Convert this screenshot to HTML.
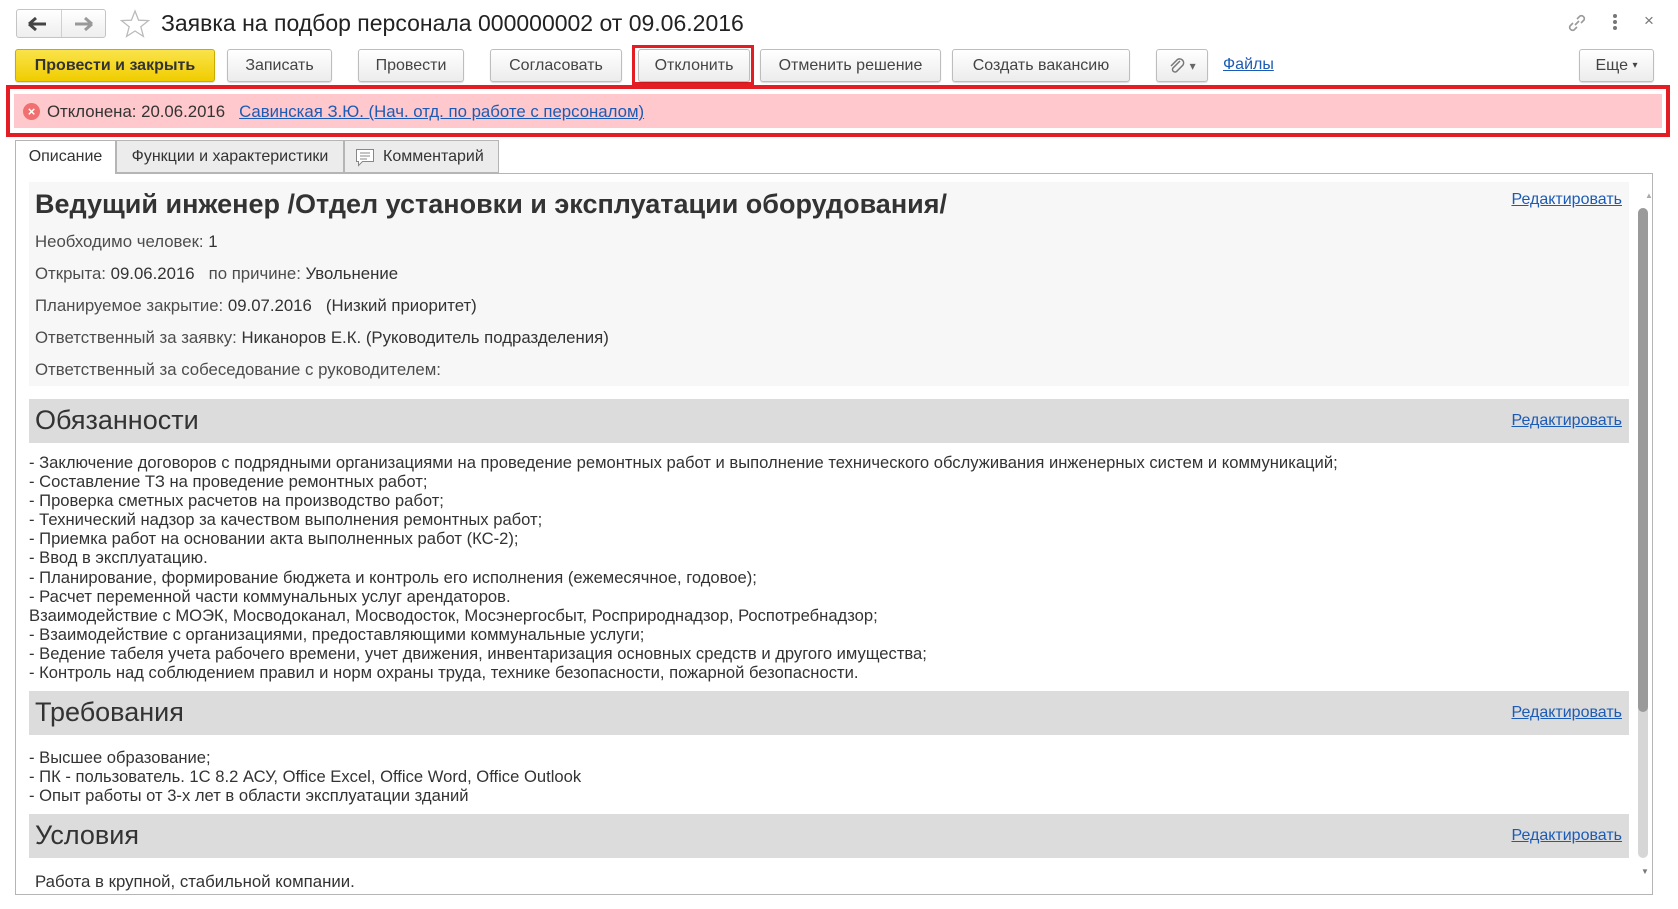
<!DOCTYPE html>
<html><head><meta charset="utf-8"><style>
*{box-sizing:border-box;margin:0;padding:0}
body{width:1678px;height:909px;background:#fff;font-family:"Liberation Sans",Arial,sans-serif;color:#333;position:relative;overflow:hidden}
.a{position:absolute}
.btn{position:absolute;top:49px;height:33px;border:1px solid #bdbdbd;border-radius:3px;background:linear-gradient(#fff,#ececec);box-shadow:0 1px 1px rgba(0,0,0,.15);font-size:16px;color:#444;display:flex;align-items:center;justify-content:center}
.row{position:absolute;left:35px;font-size:16.8px;color:#4d4d4d;line-height:20px}
.row b{font-weight:normal;color:#333}
.bar{position:absolute;left:29px;width:1600px;height:44px;background:#dcdcdc}
.bar span{position:absolute;left:6px;top:6px;font-size:27px;color:#333}
.ed{position:absolute;right:56px;font-size:16px;color:#1c5bb5;text-decoration:underline}
.lst{position:absolute;left:29px;font-size:16.6px;line-height:19.1px;color:#333;white-space:pre}
a{color:#1c5bb5;text-decoration:underline}
</style></head><body>
<div class="a" style="left:16px;top:9px;width:90px;height:29px;border:1px solid #c4c4c4;border-radius:3px;background:linear-gradient(#fff,#eee)"></div>
<div class="a" style="left:61px;top:10px;width:1px;height:27px;background:#d0d0d0"></div>
<svg class="a" style="left:27px;top:15px" width="22" height="18"><path d="M2 9H19M2 9L9 3M2 9L9 15" stroke="#444" stroke-width="3" fill="none"/></svg>
<svg class="a" style="left:72px;top:15px" width="22" height="18"><path d="M20 9H3M20 9L13 3M20 9L13 15" stroke="#999" stroke-width="3" fill="none"/></svg>
<svg class="a" style="left:120px;top:9px" width="30" height="30"><path d="M15 2L18.6 11.2 28.5 11.6 20.8 17.8 23.4 27.4 15 22 6.6 27.4 9.2 17.8 1.5 11.6 11.4 11.2Z" fill="none" stroke="#bbb" stroke-width="1.3"/></svg>
<div class="a" style="left:161px;top:9px;font-size:23px;color:#222;line-height:28px">Заявка на подбор персонала 000000002 от 09.06.2016</div>
<svg class="a" style="left:1566px;top:12px" width="22" height="22"><path d="M9 13L13 9M7 11L4 14a3 3 0 0 0 4 4l3-3M15 11l3-3a3 3 0 0 0-4-4l-3 3" stroke="#999" stroke-width="1.6" fill="none"/></svg>
<div class="a" style="left:1613px;top:14px;width:4px;height:4px;border-radius:2px;background:#777;box-shadow:0 6px 0 #777,0 12px 0 #777"></div>
<div class="a" style="left:1644px;top:11px;font-size:17px;color:#777">×</div>
<div class="btn" style="left:15px;width:200px;background:linear-gradient(#fae34a,#f0cd00);border-color:#c9ac00;font-weight:bold;color:#333">Провести и закрыть</div>
<div class="btn" style="left:227px;width:105px">Записать</div>
<div class="btn" style="left:358px;width:106px">Провести</div>
<div class="btn" style="left:490px;width:132px">Согласовать</div>
<div class="a" style="left:632px;top:45px;width:122px;height:40px;border:3px solid #e41d24"></div>
<div class="btn" style="left:638px;width:112px">Отклонить</div>
<div class="btn" style="left:760px;width:181px">Отменить решение</div>
<div class="btn" style="left:952px;width:178px">Создать вакансию</div>
<div class="btn" style="left:1156px;width:52px;font-size:12px;color:#666"><svg width="18" height="18"><path d="M12 4L5 11a2.5 2.5 0 0 0 3.5 3.5L15 8a4 4 0 0 0-5.5-5.5L3 9" stroke="#777" stroke-width="1.5" fill="none"/></svg>&nbsp;▾</div>
<div class="a" style="left:1223px;top:56px;font-size:16px;color:#1c5bb5;text-decoration:underline">Файлы</div>
<div class="btn" style="left:1579px;width:75px">Еще&nbsp;<span style="font-size:10px">▾</span></div>
<div class="a" style="left:6px;top:85px;height:52px;border:4px solid #e41d24;background:#fff;width:1664px"></div>
<div class="a" style="left:14px;top:94px;width:1648px;height:34px;background:#ffc8cc"></div>
<div class="a" style="left:23px;top:103px;width:17px;height:17px;border-radius:50%;background:#f06f6f;color:#fff;font-size:13px;font-weight:bold;text-align:center;line-height:17px">×</div>
<div class="a" style="left:47px;top:102px;font-size:16.8px;color:#333">Отклонена: 20.06.2016 &nbsp;&nbsp;<a>Савинская З.Ю. (Нач. отд. по работе с персоналом)</a></div>
<div class="a" style="left:15px;top:173px;width:1638px;height:722px;border:1px solid #b5b5b5"></div>
<div class="a" style="left:15px;top:140px;width:101px;height:34px;border:1px solid #b5b5b5;border-bottom:none;background:#fff;font-size:16px;color:#333;text-align:center;line-height:32px">Описание</div>
<div class="a" style="left:116px;top:140px;width:228px;height:33px;border:1px solid #b5b5b5;background:#ececec;font-size:16px;color:#333;text-align:center;line-height:32px">Функции и характеристики</div>
<div class="a" style="left:344px;top:140px;width:155px;height:33px;border:1px solid #b5b5b5;background:#ececec;font-size:16px;color:#333;line-height:32px;padding-left:38px">Комментарий</div>
<svg class="a" style="left:355px;top:148px" width="20" height="19"><path d="M1.5 1.5h17v12h-11l-4 4v-4h-2z" fill="#fff" stroke="#888"/><path d="M5 5h10M5 8h10M5 11h7" stroke="#888"/></svg>
<div class="a" style="left:29px;top:182px;width:1600px;height:204px;background:#f7f7f7"></div>
<div class="a" style="left:35px;top:189px;font-size:27px;font-weight:bold;color:#333">Ведущий инженер /Отдел установки и эксплуатации оборудования/</div>
<div class="ed" style="top:191px">Редактировать</div>
<div class="row" style="top:232px">Необходимо человек: <b>1</b></div>
<div class="row" style="top:264px">Открыта: <b>09.06.2016</b>&nbsp;&nbsp; по причине: <b>Увольнение</b></div>
<div class="row" style="top:296px">Планируемое закрытие: <b>09.07.2016</b>&nbsp;&nbsp; <b>(Низкий приоритет)</b></div>
<div class="row" style="top:328px">Ответственный за заявку: <b>Никаноров Е.К. (Руководитель подразделения)</b></div>
<div class="row" style="top:360px">Ответственный за собеседование с руководителем:</div>
<div class="bar" style="top:399px"><span>Обязанности</span></div>
<div class="ed" style="top:412px">Редактировать</div>
<div class="lst" style="top:453px">- Заключение договоров с подрядными организациями на проведение ремонтных работ и выполнение технического обслуживания инженерных систем и коммуникаций;
- Составление ТЗ на проведение ремонтных работ;
- Проверка сметных расчетов на производство работ;
- Технический надзор за качеством выполнения ремонтных работ;
- Приемка работ на основании акта выполненных работ (КС-2);
- Ввод в эксплуатацию.
- Планирование, формирование бюджета и контроль его исполнения (ежемесячное, годовое);
- Расчет переменной части коммунальных услуг арендаторов.
Взаимодействие с МОЭК, Мосводоканал, Мосводосток, Мосэнергосбыт, Росприроднадзор, Роспотребнадзор;
- Взаимодействие с организациями, предоставляющими коммунальные услуги;
- Ведение табеля учета рабочего времени, учет движения, инвентаризация основных средств и другого имущества;
- Контроль над соблюдением правил и норм охраны труда, технике безопасности, пожарной безопасности.</div>
<div class="bar" style="top:691px"><span>Требования</span></div>
<div class="ed" style="top:704px">Редактировать</div>
<div class="lst" style="top:748px">- Высшее образование;
- ПК - пользователь. 1С 8.2 АСУ, Office Excel, Office Word, Office Outlook
- Опыт работы от 3-х лет в области эксплуатации зданий</div>
<div class="bar" style="top:814px"><span>Условия</span></div>
<div class="ed" style="top:827px">Редактировать</div>
<div class="row" style="top:872px;color:#333">Работа в крупной, стабильной компании.</div>
<div class="a" style="left:15px;top:894px;width:1663px;height:15px;background:#fff"></div>
<div class="a" style="left:15px;top:894px;width:1638px;height:1px;background:#b5b5b5"></div>
<div class="a" style="left:1645px;top:191px;font-size:8px;color:#aaa">▲</div>
<div class="a" style="left:1638px;top:208px;width:10px;height:650px;border-radius:5px;background:#d6d6d6"></div>
<div class="a" style="left:1638px;top:208px;width:10px;height:504px;border-radius:5px;background:#9a9a9a"></div>
<div class="a" style="left:1641px;top:867px;font-size:8px;color:#777">▼</div>
</body></html>
